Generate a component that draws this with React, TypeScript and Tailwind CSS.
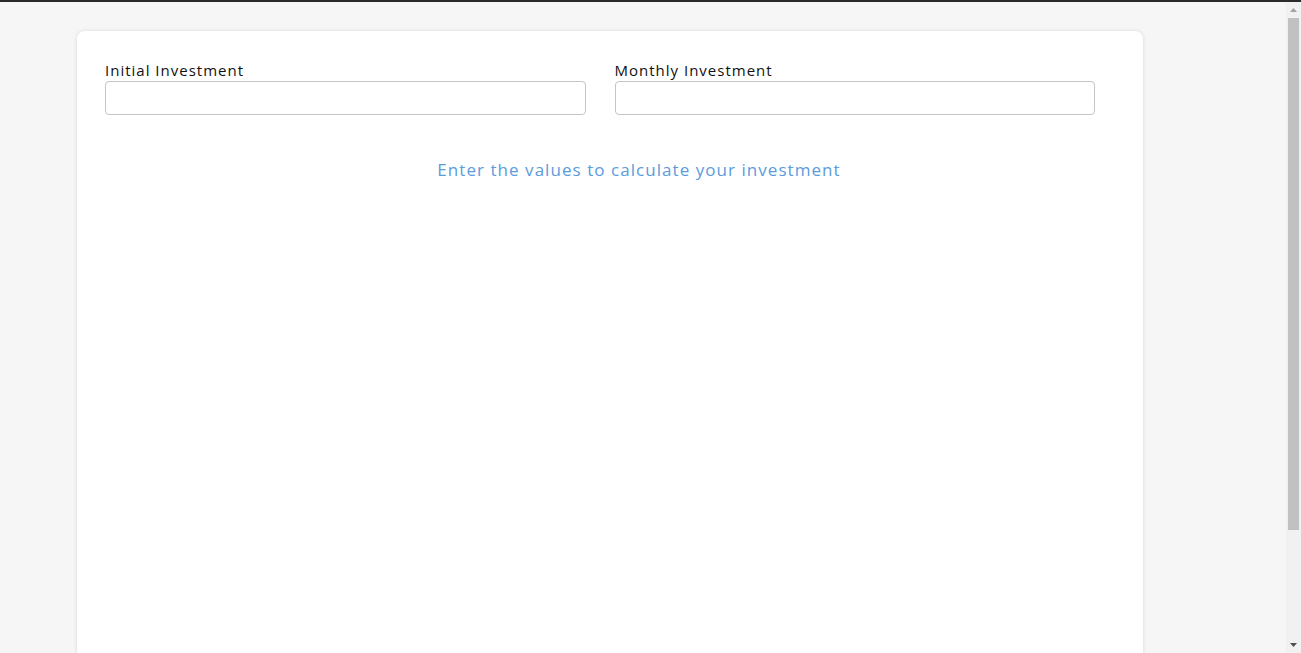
export default function App() {
  return (
    <div
      className="min-h-[653px] bg-[#f6f6f6] border-t-2 border-[#2b2b2b]"
      style={{ fontFamily: '"Open Sans", "Noto Sans", sans-serif' }}
    >
      <div className="pt-[29px] pl-[77px] pb-[20px]">
        <div className="w-[1066px] min-h-[740px] bg-white rounded-[8px] shadow-[0_0_4px_rgba(0,0,0,0.12)] pl-[28px] pr-[48px] pt-[28px]">
          <div className="grid grid-cols-2 gap-[29px]">
            <div className="flex flex-col">
              <label className="text-[15px] leading-[22px] tracking-[1px] text-[#111111]">
                Initial Investment
              </label>
              <input
                type="text"
                className="h-[34px] w-full rounded-[4px] border border-[#c4c4c4] bg-white px-2 outline-none"
              />
            </div>
            <div className="flex flex-col">
              <label className="text-[15px] leading-[22px] tracking-[1px] text-[#111111]">
                Monthly Investment
              </label>
              <input
                type="text"
                className="h-[34px] w-full rounded-[4px] border border-[#c4c4c4] bg-white px-2 outline-none"
              />
            </div>
          </div>
          <div className="flex justify-center pl-[78px] mt-[43px]">
            <p className="text-[17px] leading-[24px] tracking-[1.05px] text-[#5c9bdc]">
              Enter the values to calculate your investment
            </p>
          </div>
        </div>
      </div>

      {/* browser scrollbar */}
      <div className="fixed right-0 top-[2px] bottom-0 w-[15px] bg-[#f1f1f1] flex flex-col">
        <div className="h-[16px] flex items-center justify-center">
          <svg width="7" height="4" viewBox="0 0 7 4">
            <polygon points="3.5,0 7,4 0,4" fill="#a3a3a3" />
          </svg>
        </div>
        <div className="h-[512px] mx-[2px] bg-[#c1c1c1]" />
        <div className="flex-1" />
        <div className="h-[16px] flex items-center justify-center">
          <svg width="7" height="4" viewBox="0 0 7 4">
            <polygon points="0,0 7,0 3.5,4" fill="#505050" />
          </svg>
        </div>
      </div>
    </div>
  );
}
